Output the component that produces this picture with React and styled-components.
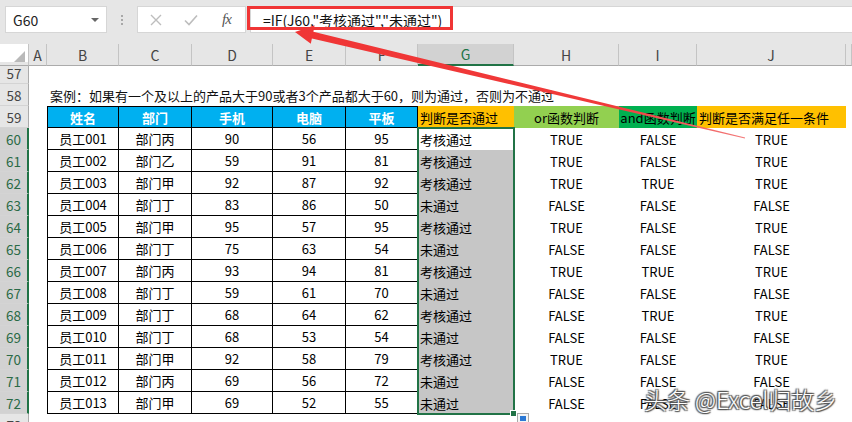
import React from "react";
import styled, { createGlobalStyle, css } from "styled-components";

const GlobalStyle = createGlobalStyle`
  html, body {
    margin: 0;
    padding: 0;
    background: #fff;
    overflow: hidden;
  }
  body {
    font-family: "Noto Sans CJK SC", "Noto Sans", sans-serif;
  }
`;

const COLS = "29px 18px 72px 73px 81px 73px 72px 96px 105px 78px 149px 1fr";

const Page = styled.div`
  position: relative;
  width: 852px;
  height: 422px;
  overflow: hidden;
  background: #fff;
`;

const Toolbar = styled.div`
  display: flex;
  align-items: flex-start;
  height: 44px;
  box-sizing: border-box;
  padding: 6px 0 0 5px;
  background: #e6e6e6;
`;

const NameBox = styled.div`
  width: 102px;
  height: 27px;
  box-sizing: border-box;
  display: flex;
  align-items: center;
  justify-content: space-between;
  padding: 0 7px 0 7px;
  background: #fff;
  border: 1px solid #d6d6d6;
  font-size: 14px;
  color: #222;
`;

const Caret = styled.span`
  width: 0;
  height: 0;
  border-left: 4px solid transparent;
  border-right: 4px solid transparent;
  border-top: 4px solid #666;
`;

const Dots = styled.div`
  display: flex;
  flex-direction: column;
  gap: 2px;
  margin: 9px 14px 0 14px;

  span {
    width: 2px;
    height: 2px;
    background: #a8a8a8;
  }
`;

const FxBox = styled.div`
  width: 109px;
  height: 27px;
  box-sizing: border-box;
  display: flex;
  align-items: center;
  padding-left: 12px;
  gap: 22px;
  background: #fff;
  border: 1px solid #d6d6d6;
`;

const FxLabel = styled.span`
  margin-left: 2px;
  font-family: "Liberation Serif", serif;
  font-style: italic;
  font-size: 15px;
  color: #555;
  letter-spacing: -1px;
`;

const FormulaInput = styled.div`
  flex: 1;
  height: 27px;
  box-sizing: border-box;
  margin-left: 4px;
  display: flex;
  align-items: center;
  padding-left: 12px;
  background: #fff;
  border: 1px solid #d6d6d6;
  border-right: none;
  font-size: 14px;
  color: #111;
`;

const Row = styled.div`
  display: grid;
  grid-template-columns: ${COLS};
  height: ${({ $h }) => $h || 22}px;
`;

const Corner = styled.div`
  position: relative;
  box-sizing: border-box;
  border-right: 1px solid #c4c4c4;
  border-bottom: 1px solid #ababab;

  &::after {
    content: "";
    position: absolute;
    right: 3px;
    bottom: 3px;
    width: 0;
    height: 0;
    border-left: 11px solid transparent;
    border-bottom: 11px solid #b9b9b9;
  }
`;

const ColHead = styled.div`
  box-sizing: border-box;
  display: flex;
  align-items: center;
  justify-content: center;
  font-size: 14px;
  color: ${({ $active }) => ($active ? "#217346" : "#444")};
  background: ${({ $active }) => ($active ? "#d2d2d2" : "#e6e6e6")};
  border-right: 1px solid #c4c4c4;
  border-bottom: ${({ $active }) =>
    $active ? "2px solid #217346" : "1px solid #ababab"};
`;

const RowHead = styled.div`
  box-sizing: border-box;
  display: flex;
  align-items: center;
  justify-content: center;
  font-size: 13.5px;
  color: ${({ $active }) => ($active ? "#2a6a46" : "#444")};
  background: ${({ $active }) => ($active ? "#d2d2d2" : "#e6e6e6")};
  border-bottom: 1px solid #d4d4d4;
  border-right: ${({ $active }) =>
    $active ? "2px solid #217346" : "1px solid #ababab"};
`;

const Cell = styled.div`
  box-sizing: border-box;
  display: flex;
  align-items: center;
  justify-content: ${({ $align }) =>
    $align === "left" ? "flex-start" : "center"};
  padding-left: ${({ $align }) => ($align === "left" ? "2px" : "0")};
  font-size: 13px;
  white-space: nowrap;
  color: ${({ $color }) => $color || "#000"};
  background: ${({ $bg }) => $bg || "transparent"};
  font-weight: ${({ $bold }) => ($bold ? 700 : 400)};
  ${({ $span }) =>
    $span &&
    css`
      grid-column: span ${$span};
    `}
  ${({ $boxed }) =>
    $boxed &&
    css`
      border-right: 1px solid #000;
      border-bottom: 1px solid #000;
    `}
  ${({ $first }) =>
    $first &&
    css`
      border-left: 1px solid #000;
    `}
  ${({ $top }) =>
    $top &&
    css`
      border-top: 1px solid #000;
    `}
`;

const Note = styled(Cell)`
  padding-left: 3px;
  font-size: 13px;
  color: #111;
`;

const Selection = styled.div`
  position: absolute;
  left: 417px;
  top: 127px;
  width: 98px;
  height: 288px;
  box-sizing: border-box;
  border: 2px solid #217346;
  pointer-events: none;

  &::after {
    content: "";
    position: absolute;
    right: -4px;
    bottom: -4px;
    width: 5px;
    height: 5px;
    background: #217346;
    border: 1px solid #fff;
  }
`;

const FillOptions = styled.div`
  position: absolute;
  left: 517px;
  top: 413px;
  width: 12px;
  height: 12px;
  box-sizing: border-box;
  border: 1px solid #a9a9a9;
  background: #f4f4f4;

  &::after {
    content: "";
    position: absolute;
    left: 2px;
    top: 2px;
    width: 6px;
    height: 5px;
    background: #2b78d4;
  }
`;

const Watermark = styled.div`
  position: absolute;
  left: 644px;
  top: 382px;
  font-size: 23px;
  font-weight: 300;
  color: #fff;
  white-space: nowrap;
  text-shadow: 1px 1px 1px #555, -1px -1px 1px #555, 1px -1px 1px #555,
    -1px 1px 1px #555, 0 0 3px rgba(0, 0, 0, 0.4);
`;

const Overlay = styled.svg`
  position: absolute;
  left: 0;
  top: 0;
  pointer-events: none;
`;

const LETTERS = ["A", "B", "C", "D", "E", "F", "G", "H", "I", "J", ""];

const HEADERS = [
  { text: "姓名", bg: "#00b0f0", color: "#fff", bold: true, boxed: true },
  { text: "部门", bg: "#00b0f0", color: "#fff", bold: true, boxed: true },
  { text: "手机", bg: "#00b0f0", color: "#fff", bold: true, boxed: true },
  { text: "电脑", bg: "#00b0f0", color: "#fff", bold: true, boxed: true },
  { text: "平板", bg: "#00b0f0", color: "#fff", bold: true, boxed: true },
  { text: "判断是否通过", bg: "#ffc000", align: "left" },
  { text: "or函数判断", bg: "#92d050" },
  { text: "and函数判断", bg: "#00b050" },
  { text: "判断是否满足任一条件", bg: "#ffc000", align: "left" },
];

const DATA = [
  ["员工001", "部门丙", 90, 56, 95, "考核通过", "TRUE", "FALSE", "TRUE"],
  ["员工002", "部门乙", 59, 91, 81, "考核通过", "TRUE", "FALSE", "TRUE"],
  ["员工003", "部门甲", 92, 87, 92, "考核通过", "TRUE", "TRUE", "TRUE"],
  ["员工004", "部门丁", 83, 86, 50, "未通过", "FALSE", "FALSE", "FALSE"],
  ["员工005", "部门甲", 95, 57, 95, "考核通过", "TRUE", "FALSE", "TRUE"],
  ["员工006", "部门丁", 75, 63, 54, "未通过", "FALSE", "FALSE", "FALSE"],
  ["员工007", "部门丙", 93, 94, 81, "考核通过", "TRUE", "TRUE", "TRUE"],
  ["员工008", "部门丁", 59, 61, 70, "未通过", "FALSE", "FALSE", "FALSE"],
  ["员工009", "部门丁", 68, 64, 62, "考核通过", "FALSE", "TRUE", "TRUE"],
  ["员工010", "部门丁", 68, 53, 54, "未通过", "FALSE", "FALSE", "FALSE"],
  ["员工011", "部门甲", 92, 58, 79, "考核通过", "TRUE", "FALSE", "TRUE"],
  ["员工012", "部门丙", 69, 56, 72, "未通过", "FALSE", "FALSE", "FALSE"],
  ["员工013", "部门甲", 69, 52, 55, "未通过", "FALSE", "FALSE", "FALSE"],
];

const Cross = () => (
  <svg width="12" height="12" viewBox="0 0 12 12">
    <path d="M1 1L11 11M11 1L1 11" stroke="#bdbdbd" strokeWidth="1.4" />
  </svg>
);

const Check = () => (
  <svg width="14" height="12" viewBox="0 0 14 12">
    <path d="M1 6.5L5 10.5L13 1.5" stroke="#bdbdbd" strokeWidth="1.6" fill="none" />
  </svg>
);

const App = () => {
  return (
    <Page>
      <GlobalStyle />
      <Toolbar>
        <NameBox>
          G60
          <Caret />
        </NameBox>
        <Dots>
          <span />
          <span />
          <span />
        </Dots>
        <FxBox>
          <Cross />
          <Check />
          <FxLabel>fx</FxLabel>
        </FxBox>
        <FormulaInput>=IF(J60,"考核通过","未通过")</FormulaInput>
      </Toolbar>

      <Row $h={18}>
        <Corner />
        {LETTERS.map((l, i) => (
          <ColHead key={i} $active={l === "G"}>
            {l}
          </ColHead>
        ))}
      </Row>

      <Row>
        <RowHead>57</RowHead>
      </Row>
      <Row>
        <RowHead>58</RowHead>
        <Cell />
        <Note $align="left" $span={10}>
          案例：如果有一个及以上的产品大于90或者3个产品都大于60，则为通过，否则为不通过
        </Note>
      </Row>
      <Row>
        <RowHead>59</RowHead>
        <Cell />
        {HEADERS.map((h, i) => (
          <Cell
            key={i}
            $bg={h.bg}
            $color={h.color}
            $bold={h.bold}
            $align={h.align}
            $boxed={h.boxed}
            $top={h.boxed}
            $first={i === 0}
          >
            {h.text}
          </Cell>
        ))}
      </Row>
      {DATA.map((r, ri) => (
        <Row key={ri}>
          <RowHead $active>{60 + ri}</RowHead>
          <Cell />
          {r.map((v, ci) => (
            <Cell
              key={ci}
              $boxed={ci < 5}
              $first={ci === 0}
              $align={ci === 5 ? "left" : undefined}
              $bg={ci === 5 && ri > 0 ? "#c6c6c6" : undefined}
            >
              {v}
            </Cell>
          ))}
        </Row>
      ))}
      <Row>
        <RowHead>73</RowHead>
      </Row>

      <Selection />
      <FillOptions />

      <Overlay width="852" height="422" viewBox="0 0 852 422">
        <defs>
          <linearGradient id="arrowFade" x1="295" y1="32" x2="745" y2="138" gradientUnits="userSpaceOnUse">
            <stop offset="0" stopColor="#f03535" />
            <stop offset="0.7" stopColor="#f03a3a" />
            <stop offset="1" stopColor="#f37a7a" />
          </linearGradient>
        </defs>
        <rect x="248.5" y="7.5" width="203" height="21" fill="none" stroke="#f03535" strokeWidth="3" />
        <polygon
          points="295,32 314.6,25.3 313.4,31.8 745.1,137.4 744.9,138.6 311.9,38.4 310.8,43.8"
          fill="url(#arrowFade)"
        />
      </Overlay>

      <Watermark>头条 @Excel归故乡</Watermark>
    </Page>
  );
};

export default App;
